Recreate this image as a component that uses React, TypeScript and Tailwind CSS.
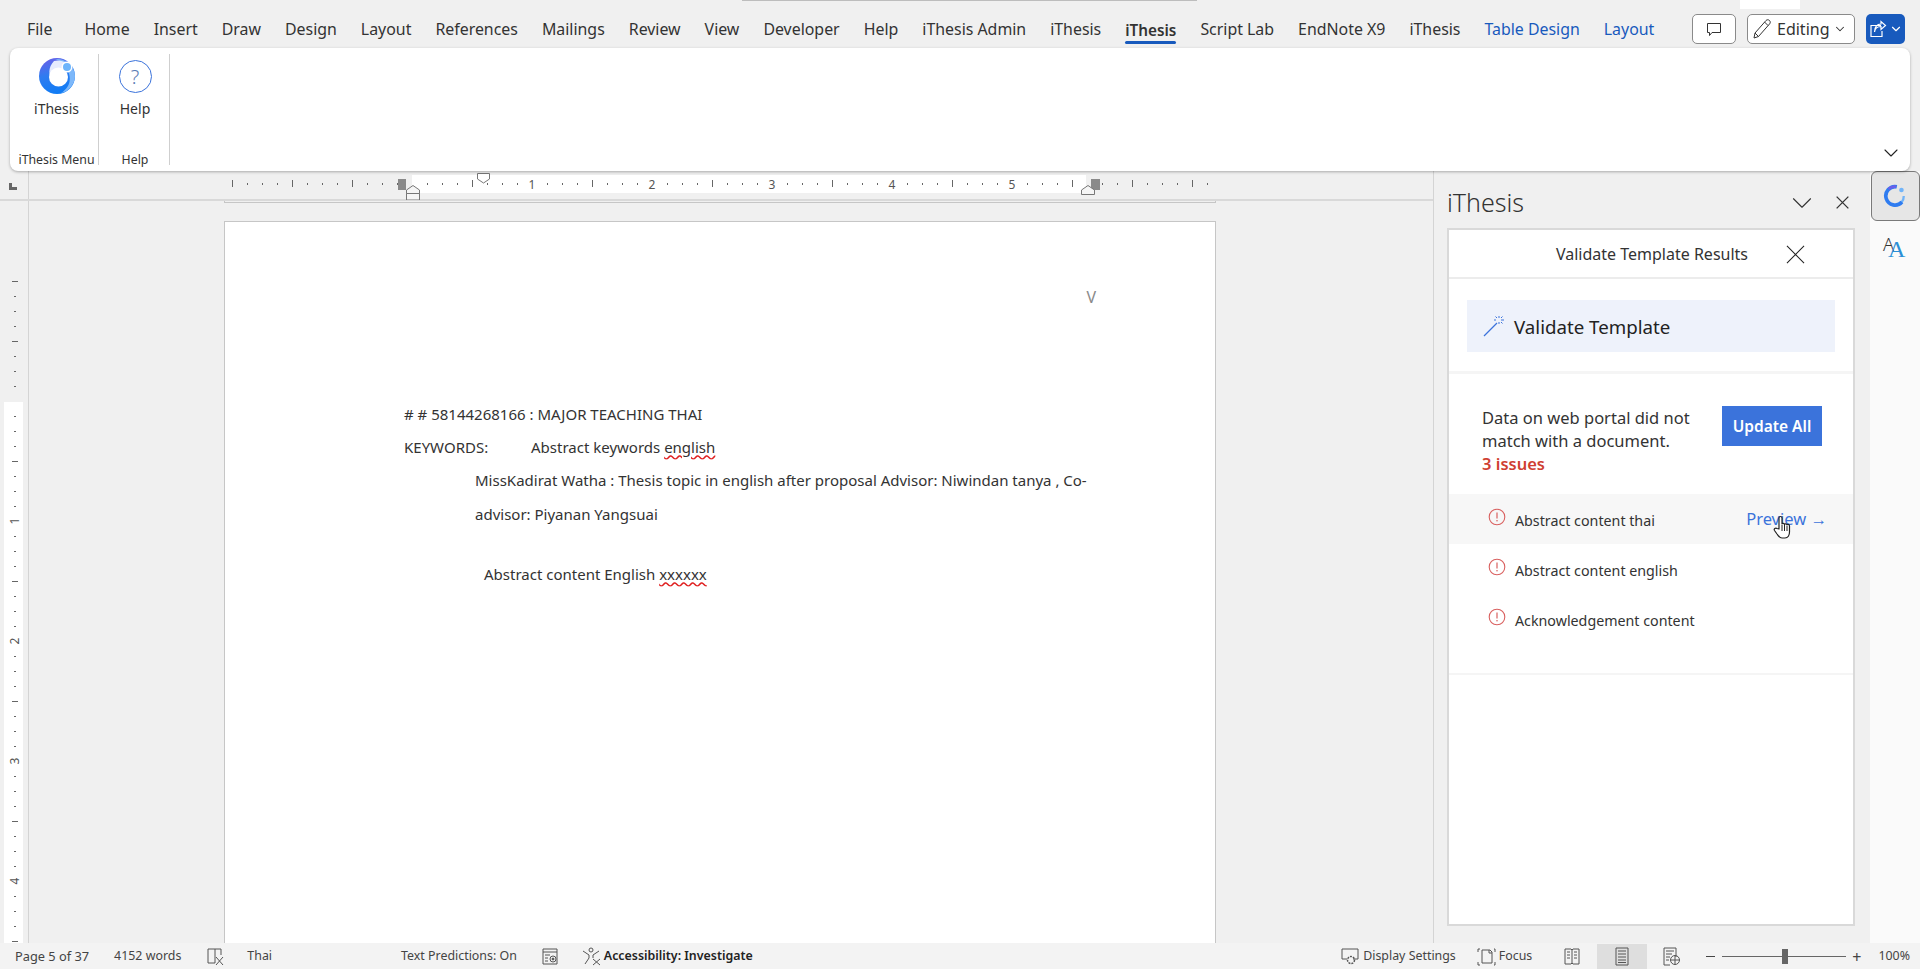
import { ChevronDown } from 'lucide-react';

const sans = "font-['Noto_Sans',sans-serif]";

const tabs = [
	'File',
	'Home',
	'Insert',
	'Draw',
	'Design',
	'Layout',
	'References',
	'Mailings',
	'Review',
	'View',
	'Developer',
	'Help',
	'iThesis Admin',
	'iThesis',
	'iThesis',
	'Script Lab',
	'EndNote X9',
	'iThesis',
	'Table Design',
	'Layout',
];

const issues = ['Abstract content thai', 'Abstract content english', 'Acknowledgement content'];

const Logo = ({ size }: { size: number }) => (
	<svg width={size} height={size} viewBox="0 0 36 36">
		<defs>
			<linearGradient id="ring" x1="0.2" y1="0" x2="0.5" y2="1">
				<stop offset="0" stopColor="#6a5fe8" />
				<stop offset="0.45" stopColor="#2f7cf0" />
				<stop offset="1" stopColor="#0f7cf5" />
			</linearGradient>
		</defs>
		<circle cx="18" cy="18" r="18" fill="url(#ring)" />
		<path d="M16 1 A18 18 0 0 1 36 18 A18 18 0 0 1 22 35 C30 30 33 22 29 13 C27 7 22 3 16 1Z" fill="#7db8fa" />
		<path d="M15 3 C22 1 31 5 32 12 L20 12 C14 14 12 19 14 24 C9 18 9 9 15 3Z" fill="#e6ebfd" />
		<circle cx="19.5" cy="19" r="9.5" fill="#fff" />
		<circle cx="28" cy="9" r="5.5" fill="#fff" />
		<circle cx="28" cy="9" r="4" fill="#6db5fb" />
	</svg>
);

const CrossIcon = ({ size, color = '#333', weight = 1.1 }: { size: number; color?: string; weight?: number }) => (
	<svg width={size} height={size} viewBox="0 0 20 20" fill="none" stroke={color} strokeWidth={weight}>
		<path d="M1 1L19 19M19 1L1 19" />
	</svg>
);

const HorizontalRuler = () => {
	const ticks = Array.from({ length: 66 }, (_, i) => 232 + i * 15);
	return (
		<svg width="1404" height="29" viewBox="29 171 1404 29" className="block">
			<rect x="412" y="175" width="674" height="18" fill="#fff" />
			{ticks.map((x) => {
				const n = (x - 412) / 120;
				if (Number.isInteger(n) && n > 0 && n < 6)
					return (
						<text key={x} x={x} y="189" textAnchor="middle" fontSize="12" fontFamily="Noto Sans" fill="#555">
							{n}
						</text>
					);
				if (x === 412 || x === 1087) return null;
				const major = (x - 412) % 60 === 0;
				return <rect key={x} x={x} y={major ? 180 : 183} width="1" height={major ? 7 : 2} fill="#666" />;
			})}
			<rect x="398" y="179" width="8" height="11" fill="#8a8a8a" />
			<rect x="1091" y="179" width="9" height="11" fill="#8a8a8a" />
			<path d="M477.5 173.5H489.5V179L483.5 183L477.5 179Z" fill="#fff" stroke="#777" />
			<path d="M406.5 193.5V190L413 185.5L419.5 190V193.5ZM406.5 193.5H419.5V200H406.5Z" fill="#f5f5f5" stroke="#777" />
			<path d="M1081.5 194.5V190L1088 185.5L1094.5 190V194.5Z" fill="#f5f5f5" stroke="#777" />
		</svg>
	);
};

const VerticalRuler = () => {
	const ticks = Array.from({ length: 45 }, (_, i) => 281 + i * 15);
	return (
		<svg width="28" height="742" viewBox="0 201 28 742" className="block">
			<rect x="4" y="402" width="19" height="541" fill="#fff" />
			{ticks.map((y) => {
				const n = (y - 401) / 120;
				if (Number.isInteger(n) && n > 0)
					return (
						<text
							key={y}
							x="15"
							y={y + 4}
							textAnchor="middle"
							fontSize="12"
							fontFamily="Noto Sans"
							fill="#555"
							transform={`rotate(-90 15 ${y})`}
						>
							{n}
						</text>
					);
				if (y === 401) return null;
				const major = (y - 401) % 60 === 0;
				return <rect key={y} x={major ? 12 : 14} y={y} width={major ? 6 : 2} height="1" fill="#666" />;
			})}
		</svg>
	);
};

const AlertIcon = () => (
	<svg width="18" height="18" viewBox="0 0 18 18" className="shrink-0">
		<circle cx="9" cy="9" r="7.8" fill="none" stroke="#d9605f" strokeWidth="1.1" />
		<path d="M9 4.5V10.5" stroke="#d9605f" strokeWidth="1.2" />
		<circle cx="9" cy="12.8" r="0.8" fill="#d9605f" />
	</svg>
);

const HandCursor = () => (
	<svg width="20" height="24" viewBox="0 0 20 24" className="absolute left-[27px] top-[7px]">
		<path
			d="M6 14V3C6 1 9 1 9 3V9C9 8 11.5 8 11.5 9.5C11.5 8.5 14 8.5 14 10C14 9 16.5 9 16.5 11V17C16.5 20 15 23 12 23H9C6.5 23 5.5 21 4 19L1.5 15.5C0.5 14 2.5 12.5 4 13.5Z"
			fill="#fff"
			stroke="#222"
			strokeWidth="1.2"
			strokeLinejoin="round"
		/>
		<path d="M9 10V16M11.5 10V16M14 11V16" stroke="#222" strokeWidth="1" />
	</svg>
);

const StatusIcon = ({ children, w = 19 }: { children: React.ReactNode; w?: number }) => (
	<svg width={w} height="19" viewBox={`0 0 ${w} 19`} fill="none" stroke="#555" strokeWidth="1" className="shrink-0">
		{children}
	</svg>
);

const App = () => (
	<div className={`relative flex h-[969px] w-[1920px] flex-col overflow-hidden bg-[#f0f0f0] ${sans}`}>
		{/* bits of the window behind the title bar */}
		<div className="absolute left-[742px] top-0 h-[1px] w-[455px] bg-[#bdbdbd]" />
		<div className="absolute left-[1740px] top-0 h-[9px] w-[60px] bg-white" />

		{/* tab strip */}
		<div className="flex h-[48px] shrink-0 items-center pl-[27px] pr-[15px] pt-[9px] text-[15.9px] text-[#333]">
			<div className="flex gap-[24px] whitespace-nowrap pt-[2px]">
				{tabs.map((tab, index) => (
					<span
						key={index}
						className={
							index === 0
								? 'mr-[8px]'
								: index === 14
									? 'relative text-[15.3px] font-semibold leading-[24px]'
									: index > 17
										? 'text-[#185abd]'
										: ''
						}
					>
						{tab}
						{index === 14 && <span className="absolute -bottom-[2px] left-0 h-[3px] w-full rounded-full bg-[#185abd]" />}
					</span>
				))}
			</div>
			<div className="ml-auto flex items-center gap-[11px]">
				<button className="flex h-[30px] w-[44px] items-center justify-center rounded-[5px] border border-[#8a8a8a] bg-white">
					<svg width="16" height="16" viewBox="0 0 16 16" fill="none" stroke="#333">
						<path d="M1.5 2.5H14.5V11.5H6L3.5 14.5V11.5H1.5Z" />
					</svg>
				</button>
				<button className="flex h-[30px] w-[108px] items-center rounded-[5px] border border-[#8a8a8a] bg-white pl-[4px] text-[16px] text-[#333]">
					<svg width="20" height="22" viewBox="0 0 20 22" fill="none" stroke="#333" className="mr-[5px]">
						<path d="M2 20L3 15L14 2.5C15 1.5 16.5 1.5 17.5 2.5C18.5 3.5 18.5 5 17.5 6L6.5 18.5Z" />
						<path d="M12.5 4L16 7.5M3 15L6.5 18.5" />
					</svg>
					Editing
					<ChevronDown size={14} strokeWidth={1.8} className="ml-[3px]" />
				</button>
				<button className="flex h-[30px] w-[39px] items-center justify-center gap-[2px] rounded-[5px] bg-[#185abd]">
					<svg width="18" height="18" viewBox="0 0 18 18" fill="none" stroke="#fff" strokeWidth="1.2">
						<path d="M12 5.5H2V16.5H13V11" />
						<path d="M5.5 12C6 8.5 8.5 6.5 12 6.5V9.5L16.5 5.5L12 1.5V4C8 4 5.5 7 5.5 12Z" />
					</svg>
					<ChevronDown size={14} color="#fff" strokeWidth={2} />
				</button>
			</div>
		</div>

		{/* ribbon */}
		<div className="relative z-10 ml-[10px] flex h-[123px] w-[1900px] shrink-0 rounded-[8px] bg-white shadow-[0_1px_3px_rgba(0,0,0,0.3)]">
			<div className="my-[6px] flex w-[89px] flex-col items-center justify-between border-r border-[#cfcfcf] pl-[5px] pt-[4px]">
				<div className="flex flex-col items-center">
					<Logo size={36} />
					<span className="mt-[4px] text-[14px] text-[#333]">iThesis</span>
				</div>
				<span className="whitespace-nowrap text-[12.3px] leading-[10px] text-[#333]">iThesis Menu</span>
			</div>
			<div className="my-[6px] flex w-[71px] flex-col items-center justify-between border-r border-[#cfcfcf] pl-[2px] pt-[6px]">
				<div className="flex flex-col items-center">
					<div className="flex h-[33px] w-[33px] items-center justify-center rounded-full border border-[#3b73db] text-[20px] font-light leading-none text-[#5a7bb5]">
						?
					</div>
					<span className="mt-[5px] text-[14px] text-[#333]">Help</span>
				</div>
				<span className="text-[12.3px] leading-[10px] text-[#333]">Help</span>
			</div>
			<ChevronDown size={24} strokeWidth={1.1} color="#222" className="absolute bottom-[6px] right-[7px]" />
		</div>

		{/* workspace */}
		<div className="flex min-h-0 flex-1">
			<div className="flex w-[1434px] min-w-0 flex-col border-r border-[#d4d4d4]">
				<div className="flex h-[30px] shrink-0 border-b-2 border-[#d9d9d9]">
					<div className="flex w-[29px] shrink-0 items-center justify-center border-r border-[#d4d4d4] pr-[2px] pt-[2px]">
						<div className="h-[7px] w-[8px] border-b-[3px] border-l-[3px] border-[#666]" />
					</div>
					<HorizontalRuler />
				</div>
				<div className="flex min-h-0 flex-1">
					<div className="w-[29px] shrink-0 border-r border-[#d4d4d4]">
						<VerticalRuler />
					</div>
					<div className="min-w-0 flex-1 overflow-hidden pl-[195px]">
						<div className="h-[2px] w-[992px] border-x border-b border-[#c6c6c6]" />
						<div className="mt-[18px] h-[760px] w-[992px] border border-[#c6c6c6] bg-white pt-[64px] text-[15px] text-[#333]">
							<div className="pr-[119px] text-right text-[16px] leading-[22px] text-[#8a8a8a]">V</div>
							<div className="pl-[179px] pt-[90px] leading-[33px]">
								<p># # 58144268166 : MAJOR TEACHING THAI</p>
								<p className="flex">
									<span className="w-[127px]">KEYWORDS:</span>
									<span>
										Abstract keywords <span className="underline decoration-[#e02020] decoration-wavy">english</span>
									</span>
								</p>
								<p className="whitespace-nowrap pl-[71px]">
									MissKadirat Watha : Thesis topic in english after proposal Advisor: Niwindan tanya , Co-
								</p>
								<p className="pl-[71px] pt-[1px]">advisor: Piyanan Yangsuai</p>
								<p className="pl-[80px] pt-[27px]">
									Abstract content English <span className="underline decoration-[#e02020] decoration-wavy">xxxxxx</span>
								</p>
							</div>
						</div>
					</div>
				</div>
			</div>

			{/* task pane */}
			<div className="flex w-[436px] shrink-0 flex-col pl-[13px] pr-[15px]">
				<div className="flex h-[57px] shrink-0 items-center pt-[6px]">
					<span className="text-[25px] font-light text-[#333]">iThesis</span>
					<ChevronDown size={34} strokeWidth={0.8} color="#333" className="ml-auto mr-[17px] mt-[1px]" />
					<CrossIcon size={13} weight={2} />
					<span className="w-[6px]" />
				</div>
				<div className="mb-[17px] flex min-h-0 flex-1 flex-col border-2 border-[#d9d9d9] bg-white">
					<div className="relative flex h-[49px] shrink-0 items-center justify-center border-b-2 border-[#ececec] pl-[2px] text-[16px] text-[#333]">
						Validate Template Results
						<span className="absolute left-[337px] top-[15px]">
							<CrossIcon size={19} color="#222" />
						</span>
					</div>
					<div className="h-[95px] shrink-0 border-b-[3px] border-[#f5f5f5] px-[18px] pt-[21px]">
						<div className="flex h-[52px] items-center bg-[#eef2fb] pl-[16px] pt-[2px] text-[18.7px] text-[#222]">
							<svg width="22" height="22" viewBox="0 0 22 22" fill="none" stroke="#3b73db" className="-mt-[2px] mr-[9px]">
								<path d="M1 21L14 8" strokeWidth="1.2" />
								<path d="M16 1V3M16 7V9M11 5H13M18 5H21M12.5 1.5L14 3M18 3L19.5 1.5M18 7L19.5 8.5" strokeWidth="1" />
							</svg>
							Validate Template
						</div>
					</div>
					<div className="flex h-[120px] shrink-0 items-start pl-[33px] pt-[32px]">
						<div className="w-[240px] text-[16.5px] leading-[23px] text-[#333]">
							<p>Data on web portal did not match with a document.</p>
							<p className="font-semibold text-[#cf3f32]">3 issues</p>
						</div>
						<button className="h-[40px] w-[100px] bg-[#3b73db] pt-[1px] text-[15.5px] font-semibold text-white">
							Update All
						</button>
					</div>
					<div className="h-[181px] shrink-0 border-b-[2px] border-[#f5f5f5]">
						{issues.map((issue, index) => (
							<div
								key={issue}
								className={`flex h-[50px] items-start pl-[39px] pt-[14px] text-[14.25px] text-[#333] ${index === 0 ? 'bg-[#f7f7f7]' : ''}`}
							>
								<AlertIcon />
								<span className="ml-[9px] pt-[2px]">{issue}</span>
								{index === 0 && (
									<span className="relative ml-auto mr-[26px] text-[16.5px] leading-[22px] text-[#3b73db]">
										Preview →
										<HandCursor />
									</span>
								)}
							</div>
						))}
					</div>
				</div>
			</div>

			{/* side rail */}
			<div className="flex w-[50px] shrink-0 flex-col items-center bg-[#fafafa]">
				<div className="flex h-[50px] w-[49px] items-center justify-center rounded-[6px] border border-[#7a7a7a] bg-[#e6e6e6]">
					<svg width="24" height="24" viewBox="0 0 26 26" fill="none">
						<path d="M22.5 13A10 10 0 0 1 20 20" stroke="#72b4f8" strokeWidth="2.5" />
						<path d="M15 3A10 10 0 1 0 20.5 19.5" stroke="#2f7cf0" strokeWidth="4" />
						<path d="M6 5.5C8 3.5 10.5 2.5 14 3" stroke="#6a5fe8" strokeWidth="3" />
						<circle cx="20" cy="6.5" r="2.5" fill="#72b4f8" />
					</svg>
				</div>
				<svg width="34" height="34" viewBox="0 0 34 34" className="mt-[9px]">
					<text x="5" y="21" fontSize="18" fontFamily="Noto Sans" fontWeight="300" fill="#333">
						A
					</text>
					<text x="10" y="27" fontSize="24" fontFamily="Liberation Serif" fill="#2b8fd6">
						A
					</text>
				</svg>
			</div>
		</div>

		{/* status bar */}
		<div className="flex h-[26px] shrink-0 items-center bg-[#f3f3f3] pl-[15px] pt-[1px] text-[12.4px] text-[#444]">
			<span className="text-[12.8px]">Page 5 of 37</span>
			<span className="ml-[25px]">4152 words</span>
			<span className="ml-[25px]">
				<StatusIcon>
					<path d="M2 2H9V16H2ZM9 2H15V8" />
					<path d="M10 10L17 18M17 10L10 18" />
				</StatusIcon>
			</span>
			<span className="ml-[22px]">Thai</span>
			<span className="ml-[129px]">Text Predictions: On</span>
			<span className="ml-[24px]">
				<StatusIcon>
					<path d="M2 2H16V17H2ZM2 5H16M4 8H9M4 11H7M4 14H7" />
					<circle cx="12" cy="12" r="3" />
					<circle cx="12" cy="12" r="1" fill="#555" />
				</StatusIcon>
			</span>
			<span className="ml-[22px] mr-[2px]">
				<StatusIcon w={20}>
					<circle cx="9" cy="3" r="2" />
					<path d="M1 4L7 8V11L3 17M17 4L11 8V11M11 12L18 18M18 12L11 18" />
				</StatusIcon>
			</span>
			<span className="font-semibold text-[#222]">Accessibility: Investigate</span>

			<div className="ml-auto flex h-full items-center">
				<StatusIcon>
					<path d="M1 2H17V12H12M1 2V12H6" />
					<circle cx="10" cy="13" r="3.5" strokeDasharray="2 1" strokeWidth="1.5" />
				</StatusIcon>
				<span className="ml-[3px]">Display Settings</span>
				<span className="ml-[21px]">
					<StatusIcon>
						<path d="M5 3H13L15 5V16H5ZM12 3V6H15M1 5V2H3M17 2H18V5M1 15V18H3M17 18H18V15" />
					</StatusIcon>
				</span>
				<span className="ml-[3px]">Focus</span>
				<span className="ml-[31px]">
					<StatusIcon>
						<path d="M2 2H8L9 3L10 2H16V17H10L9 16L8 17H2ZM9 3V16M4 5H7M4 8H7M4 11H7M11 5H14M11 8H14M11 11H14" />
					</StatusIcon>
				</span>
				<span className="ml-[15px] flex h-full w-[50px] items-center justify-center bg-[#dedede]">
					<StatusIcon w={14}>
						<path d="M1 1H13V18H1ZM3 4H11M3 7H11M3 10H11M3 13H11M3 15.5H11" />
					</StatusIcon>
				</span>
				<span className="ml-[16px]">
					<StatusIcon>
						<path d="M1 1H13V10M1 1V18H7M3 4H11M3 7H9M3 10H7M3 13H6" />
						<circle cx="12" cy="13" r="4.5" />
						<path d="M7.5 13H16.5M12 8.5V17.5" />
					</StatusIcon>
				</span>
				<span className="ml-[24px] h-[1px] w-[9px] bg-[#444]" />
				<div className="relative ml-[7px] h-[1px] w-[124px] bg-[#666]">
					<div className="absolute left-[60px] top-[-7px] h-[15px] w-[6px] bg-[#666]" />
				</div>
				<span className="ml-[6px] text-[16px] leading-none text-[#444]">+</span>
				<span className="ml-[17px] mr-[10px]">100%</span>
			</div>
		</div>
	</div>
);

export default App;
